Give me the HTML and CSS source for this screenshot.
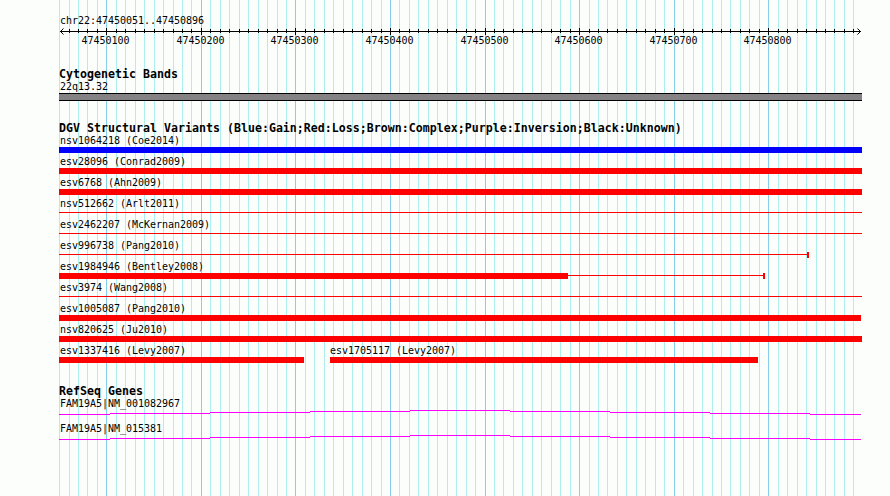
FILE: index.html
```html
<!DOCTYPE html>
<html lang="en">
<head>
    <meta charset="UTF-8">
    <meta name="viewport" content="width=device-width, initial-scale=1.0">
    <title>chr22:47450051..47450896</title>
    <link rel="stylesheet" href="styles.css">
</head>
<body>
    <div class="browser">
        <svg class="grid" id="grid" width="803" height="496" shape-rendering="crispEdges"></svg>

        <div class="ruler">
            <div class="label">chr22:47450051..47450896</div>
            <svg id="axis" width="803" height="20"></svg>
        </div>

        <div class="track cytoband">
            <h2>Cytogenetic Bands</h2>
            <div class="label">22q13.32</div>
            <div class="band"></div>
        </div>

        <div class="track variants">
            <h2>DGV Structural Variants (Blue:Gain;Red:Loss;Brown:Complex;Purple:Inversion;Black:Unknown)</h2>
            <div id="variants"></div>
        </div>

        <div class="track genes">
            <h2>RefSeq Genes</h2>
            <div class="gene">
                <div class="label">FAM19A5|NM_001082967</div>
                <svg class="intron" width="802" height="5" shape-rendering="crispEdges">
                    <path d="M0 4.5H51M51 3.5H151M151 2.5H251M251 1.5H351M351 .5H451M451 1.5H551M551 2.5H651M651 3.5H751M751 4.5H802"/>
                </svg>
            </div>
            <div class="gene">
                <div class="label">FAM19A5|NM_015381</div>
                <svg class="intron" width="802" height="5" shape-rendering="crispEdges">
                    <path d="M0 4.5H51M51 3.5H151M151 2.5H251M251 1.5H351M351 .5H451M451 1.5H551M551 2.5H651M651 3.5H751M751 4.5H802"/>
                </svg>
            </div>
        </div>
    </div>

    <script>
        // grid lines every 10 bp, a darker one every 100 bp
        const step = 9.456;
        let grid = "";
        let ticks = "";
        let numbers = "";

        for (let i = 0; i <= 84; i++) {
            const x = Math.round(0.05 + i * step);
            const major = i % 10 === 5;
            grid += `<rect class="${major ? "major" : "minor"}" x="${x}" y="0" width="1" height="496"/>`;
            if (i > 0) {
                ticks += major
                    ? `<rect x="${x}" y="2" width="1" height="7"/>`
                    : `<rect x="${x}" y="3" width="1" height="4"/>`;
            }
            if (major) {
                numbers += `<text x="${x - 24.5}" y="18">${47450050 + i * 10}</text>`;
            }
        }

        document.getElementById("grid").innerHTML = grid;
        document.getElementById("axis").innerHTML =
            `<g shape-rendering="crispEdges"><rect x="1" y="5" width="801" height="1"/>${ticks}</g>` +
            `<path class="arrow" d="M4.5 2.5L1.5 5.5L4.5 8.5M798.5 2.5L801.5 5.5L798.5 8.5"/>` + numbers;

        // box = thick part, line = thin part, both as widths in px
        const rows = [
            [{ name: "nsv1064218 (Coe2014)", box: 803, type: "gain" }],
            [{ name: "esv28096 (Conrad2009)", box: 803 }],
            [{ name: "esv6768 (Ahn2009)", box: 803 }],
            [{ name: "nsv512662 (Arlt2011)", line: 803 }],
            [{ name: "esv2462207 (McKernan2009)", line: 803 }],
            [{ name: "esv996738 (Pang2010)", line: 748, cap: true }],
            [{ name: "esv1984946 (Bentley2008)", box: 509, line: 195, cap: true }],
            [{ name: "esv3974 (Wang2008)", line: 803 }],
            [{ name: "esv1005087 (Pang2010)", box: 802 }],
            [{ name: "nsv820625 (Ju2010)", box: 803 }],
            [{ name: "esv1337416 (Levy2007)", box: 245 }, { name: "esv1705117 (Levy2007)", box: 428 }]
        ];

        document.getElementById("variants").innerHTML = rows.map(row =>
            `<div class="row">` + row.map(v => `
                <div class="variant ${v.type || "loss"}">
                    <div class="label">${v.name}</div>
                    <div class="glyph">
                        ${v.box ? `<span class="box" style="width: ${v.box}px"></span>` : ""}
                        ${v.line ? `<span class="line" style="width: ${v.line}px"></span>` : ""}
                        ${v.cap ? `<span class="cap"></span>` : ""}
                    </div>
                </div>`).join("") + `</div>`
        ).join("");
    </script>
</body>
</html>
```
FILE: styles.css
```css
body {
    margin: 0;
    background-color: #fcfefc;
    color: #000;
}

.browser {
    position: relative;
    box-sizing: border-box;
    width: 890px;
    height: 496px;
    padding: 15px 0 0 59px;
    overflow: hidden;
}

.grid {
    position: absolute;
    top: 0;
    left: 59px;
    z-index: -1;
}

.grid .minor {
    fill: #afeeee;
}

.grid .major {
    fill: #87ceeb;
}

.label {
    height: 12px;
    padding-left: 1px;
    font: 10px/12px "DejaVu Sans Mono", monospace;
    letter-spacing: -0.02px;
    white-space: nowrap;
}

h2 {
    height: 13px;
    margin: 0;
    font: bold 11.6px/13px "DejaVu Sans Mono", monospace;
    letter-spacing: 0.016px;
    white-space: nowrap;
}

.ruler {
    height: 53px;
}

.ruler svg {
    display: block;
    margin-top: -1px;
}

.ruler text {
    font: 10px "DejaVu Sans Mono", monospace;
    letter-spacing: -0.02px;
}

.ruler .arrow {
    fill: none;
    stroke: #000;
}

.cytoband {
    height: 54px;
}

.band {
    box-sizing: border-box;
    width: 803px;
    height: 8px;
    border: solid #000;
    border-width: 1px 0;
    background-color: #848284;
}

.variants {
    height: 263px;
}

.row {
    display: flex;
    gap: 26px;
    height: 21px;
}

.variant {
    flex: none;
}

.row .variant + .variant .label {
    padding-left: 0;
}

.gain {
    color: #00f;
}

.loss {
    color: #f00;
}

.variant .label {
    color: #000;
}

.glyph {
    display: flex;
    height: 6px;
}

.box {
    background-color: currentColor;
}

.line {
    height: 1px;
    margin-top: 2px;
    background-color: currentColor;
}

.cap {
    width: 2px;
    background-color: currentColor;
}

.gene {
    height: 25px;
}

.intron {
    display: block;
    fill: none;
    stroke: #f0f;
}
```
